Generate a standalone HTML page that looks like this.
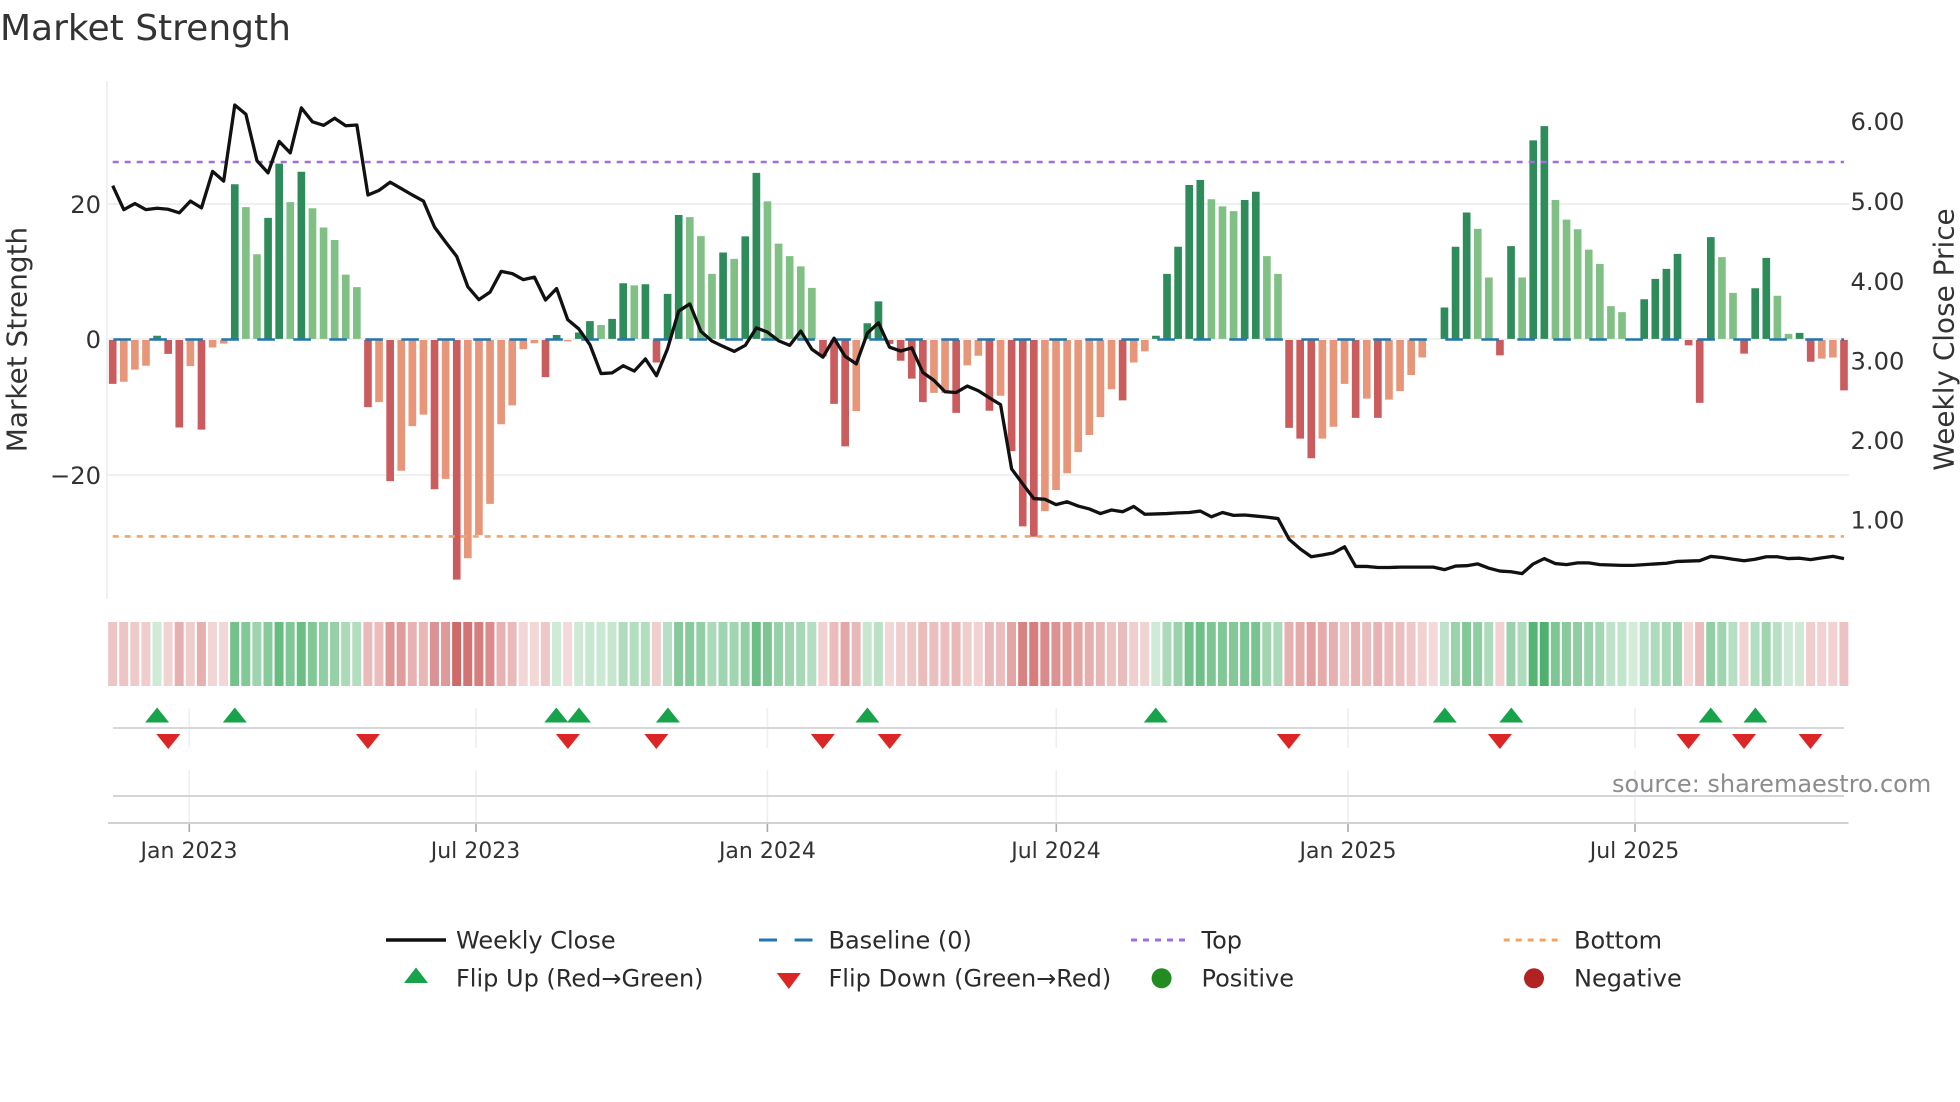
<!DOCTYPE html>
<html lang="en"><head><meta charset="utf-8"><title>Market Strength</title>
<style>
html,body{margin:0;padding:0;background:#fff;width:1960px;height:1102px;overflow:hidden}
svg{display:block}
text{font-family:"DejaVu Sans","Liberation Sans",sans-serif;fill:#333}
.t{font-size:24.2px}.x{font-size:22px;text-anchor:middle}.l{font-size:24px;fill:#2b2b2b}.a{font-size:27.9px}
</style></head><body>
<svg width="1960" height="1102" viewBox="0 0 1960 1102" xmlns="http://www.w3.org/2000/svg">
<text x="0" y="40" style="font-size:36px">Market Strength</text>
<g stroke="#eef0f2" stroke-width="2" fill="none">
<path d="M107 81V599"/><path d="M108 204H1849M108 339H1849M108 475H1849"/>
</g>
<g fill="none" transform="translate(112.7 60) scale(11.098 .35714)" stroke-width=".69">
<path stroke="#cb5c5e" d="M0 784V907M5 784V823M6 784V1029M8 784V1035M23 784V972M25 784V1179M29 784V1202M31 784V1455M39 784V888M49 784V847M64 784V830M65 784V963M66 784V1082M70 784V795M71 784V842M72 784V892M73 784V958M76 784V988M79 784V982M81 784V1095M82 784V1306M83 784V1335M91 784V953M106 784V1030M107 784V1060M108 784V1115M112 784V1002M114 784V1002M125 784V827M142 784V799M143 784V960M147 784V822M153 784V845M156 784V925"/>
<path stroke="#e7967a" d="M1 784V901M2 784V867M3 784V856M7 784V857M9 784V805M10 784V794M24 784V958M26 784V1150M27 784V1025M28 784V993M30 784V1173M32 784V1395M33 784V1330M34 784V1243M35 784V1020M36 784V967M37 784V810M38 784V793M41 784V788M67 784V983M74 784V932M75 784V932M77 784V855M78 784V828M80 784V940M84 784V1263M85 784V1204M86 784V1157M87 784V1098M88 784V1050M89 784V1000M90 784V922M92 784V847M93 784V816M109 784V1060M110 784V1027M111 784V907M113 784V948M115 784V951M116 784V927M117 784V882M118 784V833M154 784V836M155 784V833"/>
<path stroke="#2e8b5a" d="M4 781V772M11 781V348M14 781V442M15 781V290M17 781V313M40 781V770M42 781V763M43 781V731M45 781V725M46 781V625M48 781V628M50 781V655M51 781V434M55 781V539M57 781V494M58 781V316M68 781V737M69 781V676M94 781V772M95 781V599M96 781V523M97 781V350M98 781V336M102 781V392M103 781V369M120 781V693M121 781V523M122 781V427M126 781V521M128 781V225M129 781V185M138 781V670M139 781V613M140 781V585M141 781V543M144 781V496M148 781V639M149 781V554M152 781V764"/>
<path stroke="#81c084" d="M12 781V412M13 781V544M16 781V398M18 781V415M19 781V469M20 781V504M21 781V601M22 781V636M44 781V742M47 781V631M52 781V440M53 781V493M54 781V599M56 781V557M59 781V396M60 781V514M61 781V549M62 781V578M63 781V638M99 781V390M100 781V410M101 781V423M104 781V549M105 781V599M123 781V473M124 781V609M127 781V609M130 781V392M131 781V447M132 781V474M133 781V531M134 781V571M135 781V689M136 781V706M145 781V552M146 781V652M150 781V660M151 781V767"/>
</g>
<path d="M113.3 339.5H1844" stroke="#2377ae" stroke-width="2.6" stroke-dasharray="17.6 18.4" fill="none"/>
<path d="M112.7 162H1844" stroke="#a06ee0" stroke-width="2.6" stroke-dasharray="6 6" fill="none"/>
<path d="M112.7 536.4H1844" stroke="#eaa86e" stroke-width="2.6" stroke-dasharray="6 6" fill="none"/>
<g transform="translate(112.7 60) scale(11.098 .35714)">
<polyline fill="none" stroke="#111" stroke-width="3.3" stroke-linejoin="round" vector-effect="non-scaling-stroke" points="0,352 1,419 2,402 3,419 4,415 5,418 6,428 7,395 8,414 9,312 10,339 11,126 12,152 13,282 14,316 15,228 16,260 17,134 18,173 19,183 20,163 21,184 22,182 23,378 24,365 25,342 26,360 27,378 28,395 29,468 30,510 31,550 32,635 33,671 34,650 35,592 36,598 37,615 38,608 39,672 40,640 41,727 42,753 43,797 44,878 45,876 46,856 47,871 48,837 49,884 50,808 51,703 52,683 53,760 54,787 55,802 56,816 57,799 58,750 59,762 60,786 61,799 62,759 63,810 64,832 65,779 66,830 67,851 68,765 69,736 70,804 71,815 72,806 73,875 74,897 75,929 76,931 77,913 78,926 79,946 80,965 81,1145 82,1187 83,1228 84,1230 85,1245 86,1237 87,1249 88,1257 89,1270 90,1260 91,1265 92,1250 93,1272 94,1271 95,1270 96,1268 97,1267 98,1263 99,1279 100,1267 101,1275 102,1274 103,1277 104,1280 105,1284 106,1342 107,1369 108,1391 109,1386 110,1380 111,1363 112,1418 113,1418 114,1421 115,1421 116,1420 117,1420 118,1420 119,1420 120,1427 121,1417 122,1416 123,1411 124,1423 125,1431 126,1433 127,1438 128,1411 129,1396 130,1410 131,1413 132,1408 133,1408 134,1413 135,1414 136,1415 137,1415 138,1413 139,1411 140,1409 141,1404 142,1403 143,1402 144,1390 145,1393 146,1398 147,1402 148,1398 149,1391 150,1391 151,1396 152,1395 153,1399 154,1394 155,1390 156,1396"/>
</g>
<g transform="translate(112.6 622) scale(11.098 1)" stroke-width=".81" fill="none">
<g stroke="#b91c1c" opacity=".92">
<path d="M0 0V64" opacity=".28"/><path d="M1 0V64" opacity=".28"/><path d="M2 0V64" opacity=".25"/><path d="M3 0V64" opacity=".24"/><path d="M5 0V64" opacity=".21"/><path d="M6 0V64" opacity=".38"/><path d="M7 0V64" opacity=".24"/><path d="M8 0V64" opacity=".38"/><path d="M9 0V64" opacity=".2"/><path d="M10 0V64" opacity=".19"/>
<path d="M23 0V64" opacity=".33"/><path d="M24 0V64" opacity=".32"/><path d="M25 0V64" opacity=".5"/><path d="M26 0V64" opacity=".47"/><path d="M27 0V64" opacity=".37"/><path d="M28 0V64" opacity=".35"/><path d="M29 0V64" opacity=".52"/><path d="M30 0V64" opacity=".49"/><path d="M31 0V64" opacity=".72"/><path d="M32 0V64" opacity=".67"/><path d="M33 0V64" opacity=".62"/><path d="M34 0V64" opacity=".55"/><path d="M35 0V64" opacity=".37"/><path d="M36 0V64" opacity=".33"/><path d="M37 0V64" opacity=".2"/><path d="M38 0V64" opacity=".19"/><path d="M39 0V64" opacity=".26"/><path d="M41 0V64" opacity=".18"/><path d="M49 0V64" opacity=".23"/>
<path d="M64 0V64" opacity=".22"/><path d="M65 0V64" opacity=".32"/><path d="M66 0V64" opacity=".42"/><path d="M67 0V64" opacity=".34"/><path d="M70 0V64" opacity=".19"/><path d="M71 0V64" opacity=".23"/><path d="M72 0V64" opacity=".27"/><path d="M73 0V64" opacity=".32"/><path d="M74 0V64" opacity=".3"/><path d="M75 0V64" opacity=".3"/><path d="M76 0V64" opacity=".34"/><path d="M77 0V64" opacity=".24"/><path d="M78 0V64" opacity=".22"/><path d="M79 0V64" opacity=".34"/><path d="M80 0V64" opacity=".31"/><path d="M81 0V64" opacity=".43"/><path d="M82 0V64" opacity=".6"/><path d="M83 0V64" opacity=".62"/><path d="M84 0V64" opacity=".56"/><path d="M85 0V64" opacity=".52"/><path d="M86 0V64" opacity=".48"/><path d="M87 0V64" opacity=".43"/><path d="M88 0V64" opacity=".39"/><path d="M89 0V64" opacity=".35"/><path d="M90 0V64" opacity=".29"/><path d="M91 0V64" opacity=".32"/><path d="M92 0V64" opacity=".23"/><path d="M93 0V64" opacity=".21"/>
<path d="M106 0V64" opacity=".38"/><path d="M107 0V64" opacity=".4"/><path d="M108 0V64" opacity=".45"/><path d="M109 0V64" opacity=".4"/><path d="M110 0V64" opacity=".38"/><path d="M111 0V64" opacity=".28"/><path d="M112 0V64" opacity=".36"/><path d="M113 0V64" opacity=".31"/><path d="M114 0V64" opacity=".36"/><path d="M115 0V64" opacity=".32"/><path d="M116 0V64" opacity=".3"/><path d="M117 0V64" opacity=".26"/><path d="M118 0V64" opacity=".22"/><path d="M119 0V64" opacity=".18"/><path d="M125 0V64" opacity=".22"/><path d="M142 0V64" opacity=".19"/><path d="M143 0V64" opacity=".32"/><path d="M147 0V64" opacity=".21"/><path d="M153 0V64" opacity=".23"/><path d="M154 0V64" opacity=".22"/><path d="M155 0V64" opacity=".22"/><path d="M156 0V64" opacity=".29"/>
</g>
<g stroke="#229e48">
<path d="M4 0V64" opacity=".21"/><path d="M11 0V64" opacity=".63"/><path d="M12 0V64" opacity=".57"/><path d="M13 0V64" opacity=".44"/><path d="M14 0V64" opacity=".54"/><path d="M15 0V64" opacity=".69"/><path d="M16 0V64" opacity=".58"/><path d="M17 0V64" opacity=".67"/><path d="M18 0V64" opacity=".57"/><path d="M19 0V64" opacity=".51"/><path d="M20 0V64" opacity=".48"/><path d="M21 0V64" opacity=".38"/><path d="M22 0V64" opacity=".35"/>
<path d="M40 0V64" opacity=".21"/><path d="M42 0V64" opacity=".22"/><path d="M43 0V64" opacity=".25"/><path d="M44 0V64" opacity=".24"/><path d="M45 0V64" opacity=".26"/><path d="M46 0V64" opacity=".36"/><path d="M47 0V64" opacity=".35"/><path d="M48 0V64" opacity=".35"/><path d="M50 0V64" opacity=".33"/><path d="M51 0V64" opacity=".55"/><path d="M52 0V64" opacity=".54"/><path d="M53 0V64" opacity=".49"/><path d="M54 0V64" opacity=".38"/><path d="M55 0V64" opacity=".44"/><path d="M56 0V64" opacity=".43"/><path d="M57 0V64" opacity=".49"/><path d="M58 0V64" opacity=".67"/><path d="M59 0V64" opacity=".59"/><path d="M60 0V64" opacity=".47"/><path d="M61 0V64" opacity=".43"/><path d="M62 0V64" opacity=".4"/><path d="M63 0V64" opacity=".34"/><path d="M68 0V64" opacity=".25"/><path d="M69 0V64" opacity=".31"/>
<path d="M94 0V64" opacity=".21"/><path d="M95 0V64" opacity=".38"/><path d="M96 0V64" opacity=".46"/><path d="M97 0V64" opacity=".63"/><path d="M98 0V64" opacity=".65"/><path d="M99 0V64" opacity=".59"/><path d="M100 0V64" opacity=".57"/><path d="M101 0V64" opacity=".56"/><path d="M102 0V64" opacity=".59"/><path d="M103 0V64" opacity=".61"/><path d="M104 0V64" opacity=".43"/><path d="M105 0V64" opacity=".38"/>
<path d="M120 0V64" opacity=".29"/><path d="M121 0V64" opacity=".46"/><path d="M122 0V64" opacity=".56"/><path d="M123 0V64" opacity=".51"/><path d="M124 0V64" opacity=".37"/><path d="M126 0V64" opacity=".46"/><path d="M127 0V64" opacity=".37"/><path d="M128 0V64" opacity=".76"/><path d="M129 0V64" opacity=".8"/><path d="M130 0V64" opacity=".59"/><path d="M131 0V64" opacity=".54"/><path d="M132 0V64" opacity=".51"/><path d="M133 0V64" opacity=".45"/><path d="M134 0V64" opacity=".41"/><path d="M135 0V64" opacity=".29"/><path d="M136 0V64" opacity=".28"/><path d="M137 0V64" opacity=".2"/><path d="M138 0V64" opacity=".31"/><path d="M139 0V64" opacity=".37"/><path d="M140 0V64" opacity=".4"/><path d="M141 0V64" opacity=".44"/><path d="M144 0V64" opacity=".49"/><path d="M145 0V64" opacity=".43"/><path d="M146 0V64" opacity=".33"/><path d="M148 0V64" opacity=".34"/><path d="M149 0V64" opacity=".43"/><path d="M150 0V64" opacity=".32"/><path d="M151 0V64" opacity=".22"/><path d="M152 0V64" opacity=".22"/>
</g>
</g>
<g stroke="#edeff3" stroke-width="1.6" fill="none">
<path d="M189.3 708V748M189.3 770V822M476 708V748M476 770V822M767.4 708V748M767.4 770V822M1056.3 708V748M1056.3 770V822M1348 708V748M1348 770V822M1635 708V748M1635 770V822"/>
</g>
<path d="M113 728H1844" stroke="#d5d8dc" stroke-width="2" fill="none"/>
<path d="M113 796H1844" stroke="#d3d5d8" stroke-width="2" fill="none"/>
<path d="M108 823H1848.5" stroke="#cfd1d4" stroke-width="2" fill="none"/>
<path d="M189.3 824V832M476 824V832M767.4 824V832M1056.3 824V832M1348 824V832M1635 824V832" stroke="#aaa" stroke-width="1.6" fill="none"/>
<g fill="#16a34a">
<path d="M157.1 707.5l12 15h-24z"/><path d="M234.8 707.5l12 15h-24z"/><path d="M556.3 707.5l12 15h-24z"/><path d="M579 707.5l12 15h-24z"/><path d="M667.9 707.5l12 15h-24z"/><path d="M867.4 707.5l12 15h-24z"/><path d="M1155.8 707.5l12 15h-24z"/><path d="M1444.8 707.5l12 15h-24z"/><path d="M1511.3 707.5l12 15h-24z"/><path d="M1710.8 707.5l12 15h-24z"/><path d="M1755.4 707.5l12 15h-24z"/>
</g>
<g fill="#dc2626">
<path d="M168.3 749l12-15h-24z"/><path d="M367.9 749l12-15h-24z"/><path d="M567.9 749l12-15h-24z"/><path d="M656.3 749l12-15h-24z"/><path d="M822.8 749l12-15h-24z"/><path d="M889.7 749l12-15h-24z"/><path d="M1288.8 749l12-15h-24z"/><path d="M1499.9 749l12-15h-24z"/><path d="M1688.5 749l12-15h-24z"/><path d="M1744 749l12-15h-24z"/><path d="M1810.5 749l12-15h-24z"/>
</g>
<text class="t" x="101" y="212.8" text-anchor="end">20</text>
<text class="t" x="101" y="348" text-anchor="end">0</text>
<text class="t" x="101" y="484" text-anchor="end">−20</text>
<text class="t" x="1850.5" y="129.8">6.00</text>
<text class="t" x="1850.5" y="210.2">5.00</text>
<text class="t" x="1850.5" y="290.2">4.00</text>
<text class="t" x="1850.5" y="369.5">3.00</text>
<text class="t" x="1850.5" y="449.2">2.00</text>
<text class="t" x="1850.5" y="528.4">1.00</text>
<text class="a" text-anchor="middle" transform="translate(26.7 339.5) rotate(-90)">Market Strength</text>
<text class="a" text-anchor="middle" transform="translate(1953.3 339.5) rotate(-90)">Weekly Close Price</text>
<text class="x" x="189" y="858">Jan 2023</text>
<text class="x" x="475.5" y="858">Jul 2023</text>
<text class="x" x="767.4" y="858">Jan 2024</text>
<text class="x" x="1056" y="858">Jul 2024</text>
<text class="x" x="1348" y="858">Jan 2025</text>
<text class="x" x="1634.5" y="858">Jul 2025</text>
<text x="1612" y="792" style="font-size:24px;fill:#8c8c8c">source: sharemaestro.com</text>
<path d="M386 940H446" stroke="#111" stroke-width="3.4" fill="none"/>
<path d="M759 940H777M794.6 940H812.5" stroke="#2377ae" stroke-width="3" fill="none"/>
<path d="M1131 940H1187" stroke="#a06ee0" stroke-width="3" stroke-dasharray="6 6" fill="none"/>
<path d="M1503.7 940H1559" stroke="#f4a460" stroke-width="3" stroke-dasharray="6 6" fill="none"/>
<path d="M416 967.5l12 15.5h-24z" fill="#16a34a"/>
<path d="M788.8 989l12-16h-24z" fill="#dc2626"/>
<circle cx="1161.6" cy="978.3" r="10" fill="#228b22"/>
<circle cx="1534" cy="978.3" r="10" fill="#b22222"/>
<text class="l" x="456" y="948.3">Weekly Close</text>
<text class="l" x="456" y="986.7">Flip Up (Red→Green)</text>
<text class="l" x="828.5" y="948.3">Baseline (0)</text>
<text class="l" x="828.5" y="986.7">Flip Down (Green→Red)</text>
<text class="l" x="1201.5" y="948.3">Top</text>
<text class="l" x="1201.5" y="986.7">Positive</text>
<text class="l" x="1574" y="948.3">Bottom</text>
<text class="l" x="1574" y="986.7">Negative</text>
</svg>
</body></html>
